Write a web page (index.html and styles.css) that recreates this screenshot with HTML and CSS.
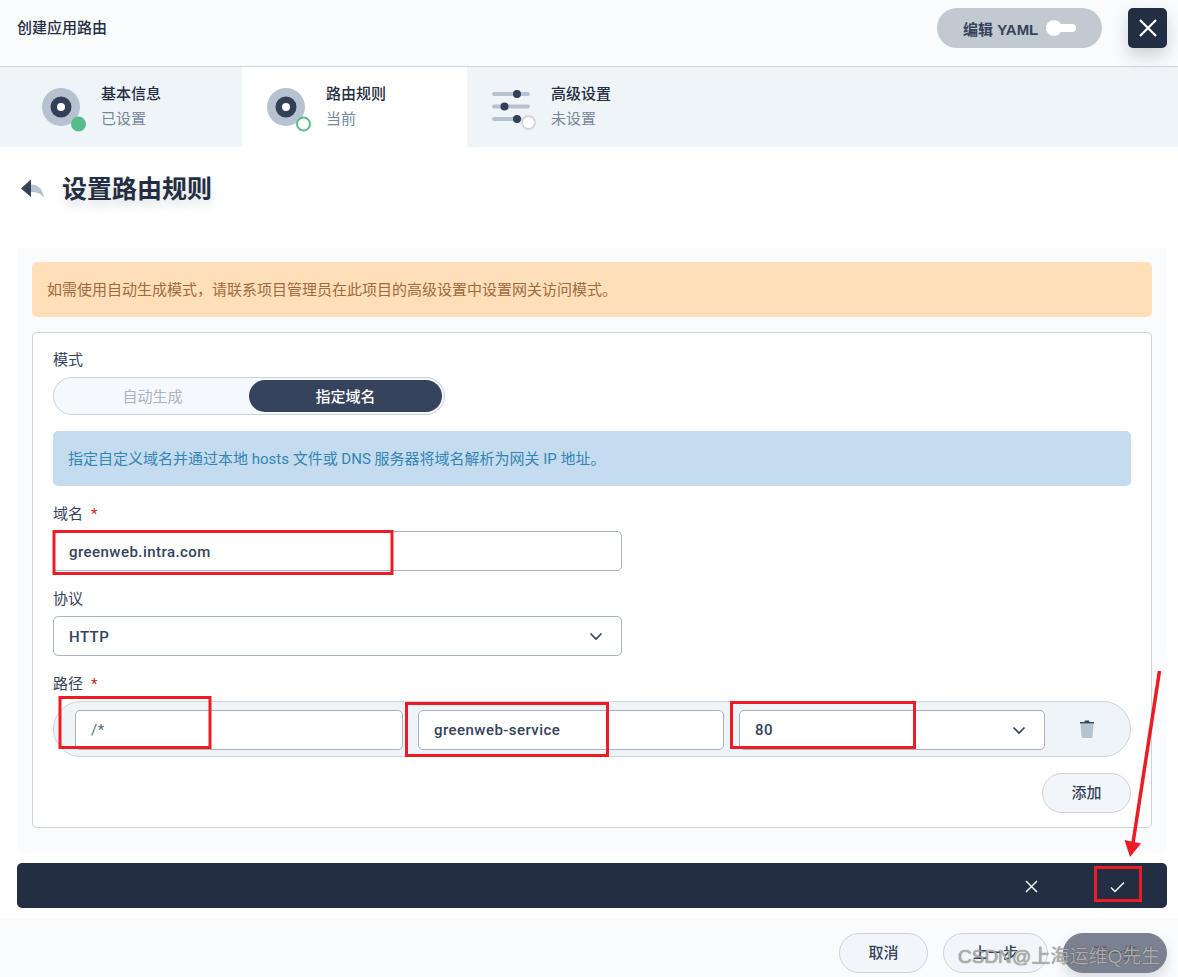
FILE: index.html
```html
<!DOCTYPE html>
<html lang="zh-CN">
<head>
<meta charset="utf-8">
<title>创建应用路由</title>
<link rel="stylesheet" href="styles.css">
</head>
<body>
<div class="page">
  <header class="top">
    <div class="top-title">创建应用路由</div>
    <div class="yaml-btn"><span>编辑 YAML</span><i class="yaml-toggle"></i></div>
    <div class="close-btn">
      <svg width="20" height="20" viewBox="0 0 20 20"><path d="M2 2L18 18M18 2L2 18" stroke="#fff" stroke-width="2.2" fill="none"/></svg>
    </div>
  </header>

  <nav class="tabs">
    <div class="tab tab-first">
      <svg class="tab-icon" width="48" height="48" viewBox="0 0 48 48"><circle cx="19" cy="19" r="19" fill="#b6c2cf"/><circle cx="19" cy="19" r="10.5" fill="#324158"/><circle cx="19" cy="19" r="4" fill="#fff"/><circle cx="36.500" cy="36" r="7.500" fill="#55bc8a"/></svg>
      <div class="tab-text"><b>基本信息</b><span>已设置</span></div>
    </div>
    <div class="tab tab-active">
      <svg class="tab-icon" width="48" height="48" viewBox="0 0 48 48"><circle cx="19" cy="19" r="19" fill="#b6c2cf"/><circle cx="19" cy="19" r="10.500" fill="#324158"/><circle cx="19" cy="19" r="4" fill="#fff"/><circle cx="36.500" cy="36" r="6.500" fill="#fff" stroke="#55bc8a" stroke-width="2"/></svg>
      <div class="tab-text"><b>路由规则</b><span>当前</span></div>
    </div>
    <div class="tab tab-last">
      <svg class="tab-icon" width="48" height="48" viewBox="0 0 48 48"><rect x="0" y="4" width="38" height="4" rx="2" fill="#b6c2cf"/><rect x="0" y="16.500" width="38" height="4" rx="2" fill="#b6c2cf"/><rect x="0" y="29" width="30" height="4" rx="2" fill="#b6c2cf"/><circle cx="25" cy="6" r="4" fill="#324158"/><circle cx="12.500" cy="18.500" r="4" fill="#324158"/><circle cx="25" cy="31" r="4" fill="#324158"/><circle cx="36.500" cy="34.500" r="6.500" fill="#fff" stroke="#d1d7df" stroke-width="2"/></svg>
      <div class="tab-text"><b>高级设置</b><span>未设置</span></div>
    </div>
  </nav>

  <div class="heading">
    <svg width="24" height="20" viewBox="0 0 24 20"><path d="M10 5.500C17 5.500 22 10 23 19C20 14.500 16 13 10 13Z" fill="#b6c2cf"/><path d="M10 0.500V18L0 9.500Z" fill="#324158"/></svg>
    <h1>设置路由规则</h1>
  </div>

  <main class="panel">
    <div class="alert alert-warn">如需使用自动生成模式，请联系项目管理员在此项目的高级设置中设置网关访问模式。</div>
    <section class="card">
      <div class="label label-mode">模式</div>
      <div class="switch">
        <div class="switch-off">自动生成</div>
        <div class="switch-on">指定域名</div>
      </div>
      <div class="alert alert-info">指定自定义域名并通过本地 hosts 文件或 DNS 服务器将域名解析为网关 IP 地址。</div>

      <div class="label label-field">域名<em>*</em></div>
      <div class="field field-half">greenweb.intra.com</div>

      <div class="label label-field">协议</div>
      <div class="field field-half field-select">HTTP
        <svg class="chevron" width="14" height="9" viewBox="0 0 14 9"><path d="M1.500 1.500L7 7L12.500 1.500" stroke="#324158" stroke-width="1.600" fill="none"/></svg>
      </div>

      <div class="label label-field">路径<em>*</em></div>
      <div class="path-row">
        <div class="field path-a path-placeholder">/*</div>
        <div class="field path-b">greenweb-service</div>
        <div class="field path-c field-select">80
          <svg class="chevron" width="14" height="9" viewBox="0 0 14 9"><path d="M1.500 1.500L7 7L12.500 1.500" stroke="#324158" stroke-width="1.600" fill="none"/></svg>
        </div>
        <svg class="trash" width="16" height="20" viewBox="0 0 16 20"><path d="M1.500 5H14.500L13.500 18A1.500 1.500 0 0 1 12 19H4A1.500 1.500 0 0 1 2.500 18Z" fill="#b6c2cf"/><path d="M1 3H5.500L6 1.500H10L10.500 3H15V4.500H1Z" fill="#324158"/></svg>
      </div>
      <div class="add-row"><div class="btn">添加</div></div>
    </section>
  </main>

  <div class="confirm-bar">
    <svg class="bar-x" width="13" height="13" viewBox="0 0 13 13"><path d="M1 1L12 12M12 1L1 12" stroke="#eff4f9" stroke-width="1.500" fill="none"/></svg>
    <svg class="bar-check" width="15" height="12" viewBox="0 0 15 12"><path d="M1 6.500L5 10.500L14 1.500" stroke="#eff4f9" stroke-width="1.500" fill="none"/></svg>
  </div>

  <footer class="footer">
    <div class="btn btn-cancel">取消</div>
    <div class="btn btn-prev">上一步</div>
    <div class="btn btn-next">下一步</div>
  </footer>

  <svg class="marks" width="1178" height="977" viewBox="0 0 1178 977">
    <g fill="none" stroke="#ed1c24" stroke-width="3">
      <rect x="54" y="531.500" width="338" height="42"/>
      <rect x="60" y="697.500" width="150" height="50"/>
      <rect x="406.500" y="703.500" width="201" height="52"/>
      <rect x="731.500" y="702.500" width="183" height="45"/>
      <rect x="1095.500" y="867.500" width="45" height="33"/>
    </g>
    <path d="M1159.500 671L1133 843" stroke="#ed1c24" stroke-width="3.500" fill="none"/>
    <path d="M1124.500 840L1141 843.500L1130 857Z" fill="#ed1c24"/>
  </svg>
  <div class="watermark">CSDN @上海运维Q先生</div>
</div>
</body>
</html>
```

FILE: styles.css
```css
* { box-sizing: border-box; }
html, body { margin: 0; padding: 0; }
body {
  background: #fff;
  color: #242e42;
  font-family: Roboto, "Noto Sans CJK SC", sans-serif;
  font-size: 15px;
}
.page { position: relative; width: 1178px; height: 977px; overflow: hidden; }

.top {
  height: 67px;
  background: #f9fbfd;
  border-bottom: 1px solid #ccd3db;
  display: flex;
  align-items: flex-start;
  padding: 8px 11px 0 17px;
}
.top-title { flex: 1; font-weight: 500; line-height: 40px; }
.yaml-btn {
  width: 165px;
  height: 40px;
  border-radius: 20px;
  background: #c1c9d1;
  color: #36435c;
  font-family: "Liberation Sans", "Noto Sans CJK SC", sans-serif;
  font-weight: 700;
  display: flex;
  align-items: center;
  padding-left: 26px;
  margin-right: 26px;
}
.yaml-toggle {
  position: relative;
  width: 30px;
  height: 8px;
  margin-left: 8px;
  border-radius: 4px;
  background: #fff;
}
.yaml-toggle::before {
  content: "";
  position: absolute;
  left: 0;
  top: -4px;
  width: 16px;
  height: 16px;
  border-radius: 50%;
  background: #fff;
}
.close-btn {
  width: 39px;
  height: 40px;
  border-radius: 5px;
  background: #242e42;
  display: flex;
  align-items: center;
  justify-content: center;
  box-shadow: 0 8px 16px rgba(36, 46, 66, 0.2);
}

.tabs { display: flex; height: 80px; background: #eff4f9; }
.tab { display: flex; padding-top: 21px; }
.tab-first { width: 242px; padding-left: 42px; }
.tab-active { width: 225px; padding-left: 25px; background: #fff; }
.tab-last { padding-left: 25px; }
.tab-icon { width: 48px; height: 48px; flex: none; margin-right: 11px; }
.tab-text { display: flex; flex-direction: column; margin-top: -6px; }
.tab-text b { font-weight: 500; line-height: 24px; }
.tab-text span { color: #79879c; line-height: 24px; margin-top: 1px; }

.heading {
  height: 100px;
  display: flex;
  align-items: flex-start;
  padding: 32px 0 0 21px;
}
.heading h1 {
  margin: -7px 0 0 17px;
  font-size: 25px;
  line-height: 36px;
  font-weight: 700;
  text-shadow: 0 6px 10px rgba(36, 46, 66, 0.15);
}

.panel {
  margin: 0 11px 0 17px;
  height: 606px;
  padding: 15px;
  background: #f9fbfd;
}
.alert { height: 55px; border-radius: 5px; padding: 1px 15px 0; line-height: 55px; }
.alert-warn { background: #ffdfba; color: #a06b3c; }
.alert-info { background: #c4dcee; color: #3385b4; margin-top: 16px; }

.card {
  margin-top: 15px;
  height: 496px;
  padding: 0 20px;
  background: #fff;
  border: 1px solid #ccd3db;
  border-radius: 5px;
}
.label { color: #36435c; line-height: 24px; }
.label em { color: #ca2621; font-style: normal; margin-left: 8px; }
.label-mode { margin-top: 15px; }
.label-field { margin-top: 16px; height: 29px; }

.switch {
  display: flex;
  width: 392px;
  height: 38px;
  margin-top: 5px;
  padding: 2px;
  border: 1px solid #ccd3db;
  border-radius: 19px;
  background: #f5f8fc;
}
.switch-off, .switch-on { text-align: center; line-height: 34px; height: 32px; border-radius: 16px; }
.switch-off { width: 194px; color: #abb4be; }
.switch-on { width: 194px; background: #36435c; color: #fff; font-weight: 500; }

.field {
  height: 40px;
  border: 1px solid #a9b4c2;
  border-radius: 5px;
  background: #fff;
  color: #36435c;
  font-weight: 500;
  line-height: 40px;
  letter-spacing: 0.45px;
  padding-left: 15px;
  position: relative;
}
.field-half { width: 569px; }
.chevron { position: absolute; right: 18px; top: 15px; }

.path-row {
  display: flex;
  align-items: center;
  height: 56px;
  width: 1078px;
  padding: 2px 0 0 21px;
  border: 1px solid #ccd3db;
  border-radius: 28px;
  background: #eff4f9;
}
.path-row .field { line-height: 38px; }
.path-a { width: 328px; margin-right: 15px; }
.path-b { width: 306px; margin-right: 15px; }
.path-c { width: 306px; }
.path-placeholder { font-weight: 400; color: #5a6679; }
.trash { margin: -3px 0 0 34px; }

.add-row { display: flex; justify-content: flex-end; margin-top: 16px; }
.btn {
  width: 89px;
  height: 40px;
  border: 1px solid #ccd3db;
  border-radius: 20px;
  background: #f2f6fa;
  color: #36435c;
  font-weight: 500;
  text-align: center;
  line-height: 39px;
}

.confirm-bar {
  position: relative;
  height: 45px;
  margin: 10px 11px 0 17px;
  border-radius: 5px;
  background: #242e42;
}
.bar-x { position: absolute; left: 1008px; top: 17px; }
.bar-check { position: absolute; left: 1093px; top: 18px; }

.footer {
  margin-top: 10px;
  height: 59px;
  background: #f9fbfd;
  display: flex;
  justify-content: flex-end;
  padding: 15px 11px 0 0;
}
.btn-prev { width: 105px; margin-left: 15px; }
.btn-next {
  width: 104px;
  margin-left: 15px;
  background: #7b8190;
  border-color: #7b8190;
  color: #5c6270;
  box-shadow: 0 6px 12px rgba(36, 46, 66, 0.15);
}

.marks { position: absolute; left: 0; top: 0; pointer-events: none; }
.watermark {
  position: absolute;
  left: 958px;
  top: 942px;
  font-size: 19px;
  line-height: 30px;
  white-space: nowrap;
  word-spacing: -5px;
  color: rgba(190, 190, 190, 0.85);
  text-shadow: 0 0 1px rgba(50, 50, 50, 0.85);
  font-family: "Liberation Sans", "Noto Sans CJK SC", sans-serif;
}
```
